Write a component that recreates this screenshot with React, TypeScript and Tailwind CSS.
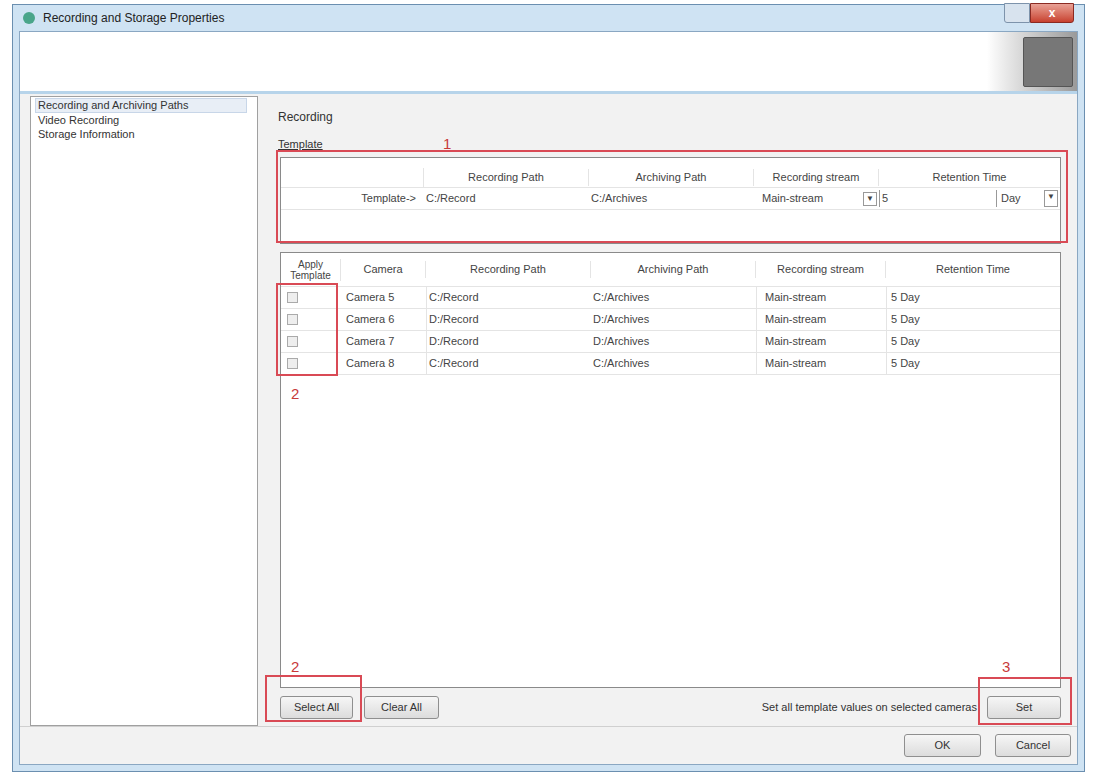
import React from "react";

const F = { fontFamily: '"Liberation Sans", Arial, sans-serif' };
const cams = [
  ["Camera 5", "C:/Record", "C:/Archives"],
  ["Camera 6", "D:/Record", "D:/Archives"],
  ["Camera 7", "D:/Record", "D:/Archives"],
  ["Camera 8", "C:/Record", "C:/Archives"],
];
const cols = "grid grid-cols-[60px_85px_165px_165px_130px_1fr]";

function Btn({ children, w }: { children: React.ReactNode; w: string }) {
  return (
    <div className={`${w} h-[23px] border border-[#8f8f8f] rounded-[3px] bg-gradient-to-b from-[#f6f6f6] to-[#dcdcdc] flex items-center justify-center text-[11px] text-[#333]`}>
      {children}
    </div>
  );
}

export default function App() {
  return (
    <div style={F} className="w-[1093px] h-[778px] bg-white relative overflow-hidden text-[12px] text-[#444]">
      <div className="absolute left-[12px] top-[4px] right-[8px] bottom-[6px] border border-[#6b8fb0] bg-[#cfe3f3] flex flex-col">
        <div className="h-[32px] flex items-center px-[10px] gap-[8px] relative">
          <div className="w-[12px] h-[12px] rounded-full bg-[#4aa58a]" />
          <span className="text-[12px] text-[#222]">Recording and Storage Properties</span>
          <div className="ml-auto flex h-[20px] -mt-[10px]">
            <div className="w-[26px] border border-[#7d93ab] bg-[#d8e3ee] rounded-bl-[3px]" />
            <div className="w-[44px] border border-[#8b2a22] bg-gradient-to-b from-[#e8a196] to-[#c7402f] rounded-br-[3px] text-white text-[12px] font-bold flex items-center justify-center">x</div>
          </div>
        </div>
        <div className="flex-1 mx-[6px] mb-[6px] flex flex-col bg-[#f2f2f2] border border-[#8aa7c2]">
          <div className="h-[62px] bg-white border-b-[3px] border-[#b7d4ea] flex justify-end">
            <div className="w-[90px] bg-gradient-to-r from-white to-[#9a9a9a] flex items-end justify-end p-[4px]">
              <div className="w-[50px] h-[50px] bg-[#777] rounded-[2px] border border-[#555]" />
            </div>
          </div>
          <div className="flex-1 flex px-[10px] pt-[2px] gap-[2px]">
            <div className="w-[228px] h-[630px] bg-white border border-[#a0a0a0] text-[11px] text-[#333] pt-[1px]">
              <div className="ml-[4px] mr-[10px] px-[2px] bg-[#e8eef6] border border-[#c8d6e8] leading-[13px]">Recording and Archiving Paths</div>
              <div className="px-[7px] leading-[14px]">Video Recording</div>
              <div className="px-[7px] leading-[14px]">Storage Information</div>
            </div>
            <div className="flex-1 flex flex-col pl-[18px] pr-[4px] pt-[12px]">
              <div className="text-[12px] text-[#333]">Recording</div>
              <div className="mt-[12px] text-[11px] underline text-[#333] leading-[12px]">Template</div>
              <div className="mt-[7px] h-[87px] bg-white border border-[#8a8a8a] text-[11px] mx-[2px]">
                <div className="grid grid-cols-[143px_165px_165px_125px_1fr] h-[20px] text-center items-center border-b border-[#e4e4e4] mt-[10px]">
                  <div className="border-r border-[#e4e4e4] h-full" />
                  <div className="border-r border-[#e4e4e4]">Recording Path</div>
                  <div className="border-r border-[#e4e4e4]">Archiving Path</div>
                  <div className="border-r border-[#e4e4e4]">Recording stream</div>
                  <div>Retention Time</div>
                </div>
                <div className="grid grid-cols-[143px_165px_165px_125px_1fr] h-[22px] items-center border-b border-[#e4e4e4]">
                  <div className="text-right pr-[8px]">Template-&gt;</div>
                  <div className="pl-[2px]">C:/Record</div>
                  <div className="pl-[2px]">C:/Archives</div>
                  <div className="flex items-center pl-[8px] pr-[2px]">Main-stream<span className="ml-auto border border-[#999] px-[2px] text-[8px] leading-[12px]">▼</span></div>
                  <div className="flex items-center pl-[2px] pr-[2px] border-l border-[#999]">5<span className="ml-auto border-l border-[#999] pl-[4px] w-[62px] flex">Day<span className="ml-auto border border-[#999] px-[2px] text-[8px] leading-[12px]">▼</span></span></div>
                </div>
              </div>
              <div className="mt-[8px] h-[436px] bg-white border border-[#8a8a8a] text-[11px] mx-[2px] flex flex-col">
                <div className={`${cols} h-[34px] items-center text-center border-b border-[#e4e4e4]`}>
                  <div className="leading-[11px] text-[10px] border-r border-[#e4e4e4]">Apply<br />Template</div>
                  <div className="border-r border-[#e4e4e4]">Camera</div>
                  <div className="border-r border-[#e4e4e4]">Recording Path</div>
                  <div className="border-r border-[#e4e4e4]">Archiving Path</div>
                  <div className="border-r border-[#e4e4e4]">Recording stream</div>
                  <div>Retention Time</div>
                </div>
                {cams.map(([c, r, a]) => (
                  <div key={c} className={`${cols} h-[22px] items-center border-b border-[#e4e4e4]`}>
                    <div className="pl-[6px]"><div className="w-[11px] h-[11px] border border-[#aaa] bg-[#eee]" /></div>
                    <div className="pl-[5px]">{c}</div>
                    <div className="pl-[2px] border-l border-[#e4e4e4] h-full flex items-center">{r}</div>
                    <div className="pl-[2px] h-full flex items-center">{a}</div>
                    <div className="pl-[8px] border-l border-[#e4e4e4] h-full flex items-center">Main-stream</div>
                    <div className="pl-[4px] border-l border-[#e4e4e4] h-full flex items-center">5 Day</div>
                  </div>
                ))}
              </div>
              <div className="flex items-center mt-[8px] mx-[2px] gap-[11px]">
                <Btn w="w-[73px]">Select All</Btn>
                <Btn w="w-[75px]">Clear All</Btn>
                <span className="ml-auto text-[11px] text-[#333] mr-[-1px]">Set all template values on selected cameras</span>
                <Btn w="w-[74px]">Set</Btn>
              </div>
            </div>
          </div>
          <div className="h-[38px] border-t border-[#d0d0d0] flex items-center justify-end gap-[14px] pr-[6px]">
            <Btn w="w-[77px]">OK</Btn>
            <Btn w="w-[76px]">Cancel</Btn>
          </div>
        </div>
      </div>
      <div className="absolute left-[276px] top-[150px] w-[792px] h-[93px] border-2 border-[#d94a55]" />
      <div className="absolute left-[276px] top-[283px] w-[62px] h-[93px] border-2 border-[#d94a55]" />
      <div className="absolute left-[265px] top-[675px] w-[97px] h-[47px] border-2 border-[#d94a55]" />
      <div className="absolute left-[978px] top-[677px] w-[94px] h-[48px] border-2 border-[#d94a55]" />
      <span className="absolute left-[443px] top-[133px] text-[15px] text-[#c83a3a]">1</span>
      <span className="absolute left-[291px] top-[383px] text-[15px] text-[#c83a3a]">2</span>
      <span className="absolute left-[291px] top-[656px] text-[15px] text-[#c83a3a]">2</span>
      <span className="absolute left-[1002px] top-[656px] text-[15px] text-[#c83a3a]">3</span>
    </div>
  );
}
